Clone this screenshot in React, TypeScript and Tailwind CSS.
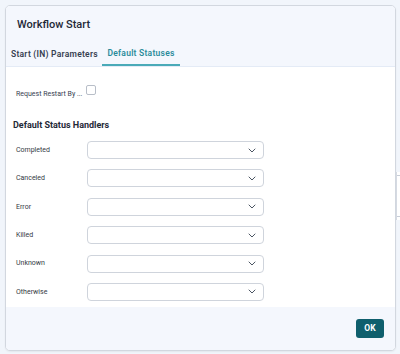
import React from "react";

const rows = ["Completed", "Canceled", "Error", "Killed", "Unknown", "Otherwise"];

function Chevron() {
  return (
    <svg width="8" height="5" viewBox="0 0 8 5" fill="none">
      <path d="M1 1 L4 4 L7 1" stroke="#4b5563" strokeWidth="1" strokeLinecap="round" strokeLinejoin="round" />
    </svg>
  );
}

export default function App() {
  return (
    <div
      className="relative w-[400px] h-[354px] bg-[#f1f5fb] pt-[5px] pl-[5px] overflow-hidden"
      style={{ fontFamily: "Roboto, 'Liberation Sans', sans-serif" }}
    >
      <div className="absolute left-[396px] top-[172px] h-[48px] w-[10px] border-l border-[#d8dde5] bg-white">
        <div className="mt-[3px] w-[3px] h-px bg-[#c8ced8]" />
        <div className="mt-[40px] w-[3px] h-px bg-[#c8ced8]" />
      </div>
      <div className="relative w-[391px] h-[346px] border border-[#d2d7df] rounded-[5px] bg-white flex flex-col overflow-hidden shadow-[0_1px_2px_rgba(0,0,0,0.06)]">
        <div className="h-[61px] bg-[#f4f7fd] border-b border-[#e4ebf6] flex flex-col shrink-0">
          <div className="pl-[11px] pt-[12px] h-[37px] text-[11px] leading-[14px] font-medium text-[#1f2937]">
            Workflow Start
          </div>
          <div className="flex h-[23px]">
            <div className="pl-[5px] pr-[6px] w-[96px] flex items-center whitespace-nowrap text-[8.5px] font-semibold tracking-[0.25px] text-[#374151]">
              Start (IN) Parameters
            </div>
            <div className="w-[78px] px-[6px] flex items-center justify-center whitespace-nowrap text-[8.5px] font-semibold tracking-[0.25px] text-[#2b8c9b] border-b-2 border-[#4aaab8]">
              Default Statuses
            </div>
          </div>
        </div>
        <div className="flex-1 bg-white pl-[10px] pr-[10px]">
          <div className="flex items-center mt-[18px] h-[12px]">
            <div className="w-[70px] text-[7px] text-[#374151] pt-[6px] whitespace-nowrap">
              Request Restart By ...
            </div>
            <div className="w-[10px] h-[10px] rounded-[2px] border border-[#b8bec8] bg-white -mt-[2px]" />
          </div>
          <div className="mt-[22px] text-[9px] font-bold text-[#1f2937] leading-[12px] -ml-[3px]">
            Default Status Handlers
          </div>
          <div className="flex flex-col gap-[10.4px] mt-[10px]">
            {rows.map((r) => (
              <div key={r} className="flex items-center h-[18px]">
                <div className="w-[71px] text-[7px] text-[#333a44]">{r}</div>
                <div className="w-[177px] h-[18px] border border-[#cfd4dc] rounded-[4px] bg-white flex items-center justify-end pr-[7px]">
                  <Chevron />
                </div>
              </div>
            ))}
          </div>
        </div>
        <div className="h-[43px] bg-[#f4f7fd] shrink-0 flex items-start justify-end pr-[11px] pt-[12px]">
          <button className="w-[28px] h-[19px] rounded-[3px] bg-[#0f5f6d] text-white text-[8.5px] font-bold flex items-center justify-center">
            OK
          </button>
        </div>
      </div>
    </div>
  );
}
